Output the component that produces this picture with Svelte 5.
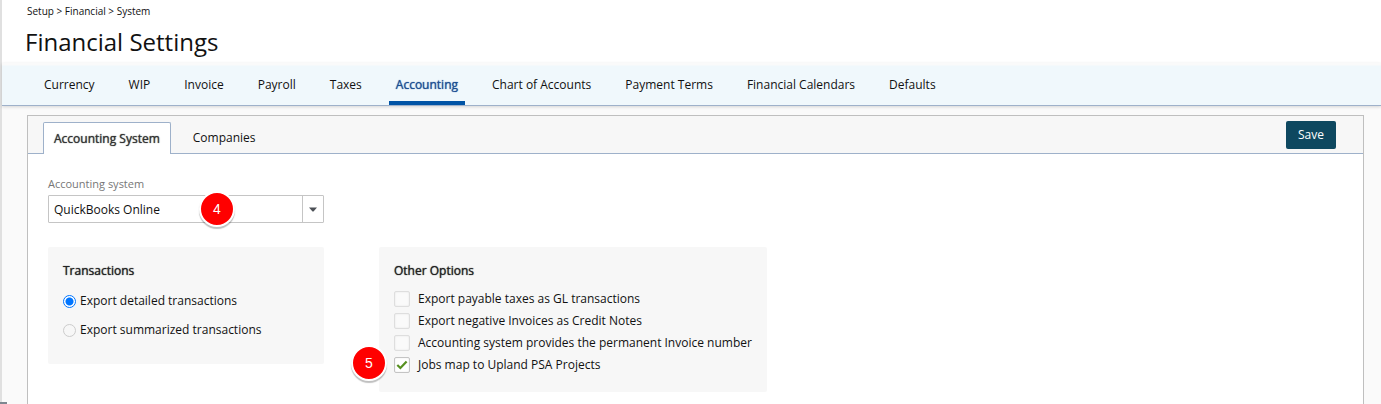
<script>
  const crumbs = ['Setup', 'Financial', 'System'];
  const sections = ['Currency', 'WIP', 'Invoice', 'Payroll', 'Taxes', 'Accounting', 'Chart of Accounts', 'Payment Terms', 'Financial Calendars', 'Defaults'];
  const tabs = ['Accounting System', 'Companies'];
  let section = $state('Accounting');
  let tab = $state('Accounting System');
  let transactions = $state('detailed');
  let options = $state([
    { label: 'Export payable taxes as GL transactions', on: false },
    { label: 'Export negative Invoices as Credit Notes', on: false },
    { label: 'Accounting system provides the permanent Invoice number', on: false },
    { label: 'Jobs map to Upland PSA Projects', on: true, step: 5 }
  ]);
</script>

<div class="page">
  <header>
    <div class="crumbs">{crumbs.join(' > ')}</div>
    <h1>Financial Settings</h1>
  </header>
  <nav>
    {#each sections as name}
      <a href="#section" class:current={name === section} onclick={() => (section = name)}>{name}</a>
    {/each}
  </nav>
  <main>
    <div class="panel">
      <div class="bar">
        <div class="tabs" role="tablist">
          {#each tabs as name}
            <button class="tab" role="tab" aria-selected={name === tab} class:selected={name === tab} onclick={() => (tab = name)}>{name}</button>
          {/each}
        </div>
        <button class="save">Save</button>
      </div>
      <div class="body">
        <div class="field">
          <label for="system">Accounting system</label>
          <div class="combo">
            <select id="system">
              <option>QuickBooks Online</option>
            </select>
            <span class="arrow"><svg width="8" height="5" viewBox="0 0 8 5"><path d="M0 0.5H8L4.5 4.5H3.5Z" fill="#4d5157" /></svg></span>
            <span class="step on-field">4</span>
          </div>
        </div>
        <div class="groups">
          <fieldset class="narrow">
            <h2>Transactions</h2>
            <div class="radios">
              <label><input type="radio" name="transactions" value="detailed" bind:group={transactions} />Export detailed transactions</label>
              <label><input type="radio" name="transactions" value="summarized" bind:group={transactions} />Export summarized transactions</label>
            </div>
          </fieldset>
          <fieldset>
            <h2>Other Options</h2>
            <div class="checks">
              {#each options as option}
                <label>
                  <span class="box">
                    <input type="checkbox" bind:checked={option.on} />
                    {#if option.on}
                      <svg class="tick" width="12" height="10" viewBox="0 0 12 10"><path d="M1.3 5L4.4 8L10.6 1.4" fill="none" stroke="#579020" stroke-width="2.2" /></svg>
                    {/if}
                  </span>
                  {option.label}
                  {#if option.step}<span class="step on-option">{option.step}</span>{/if}
                </label>
              {/each}
            </div>
          </fieldset>
        </div>
      </div>
    </div>
  </main>
  <div class="status"></div>
</div>

<style>
  :global(body) {
    margin: 0;
    background: #fafafa;
  }
  .page {
    box-sizing: border-box;
    position: relative;
    display: flex;
    flex-direction: column;
    min-height: 100vh;
    border-left: 2px solid #e0e0e0;
    font: 12px/18px "Open Sans", sans-serif;
    color: #111;
  }
  header {
    padding: 2px 23px 4px;
    background: #fff;
  }
  .crumbs {
    padding-left: 2px;
    font-size: 10px;
    line-height: 18px;
  }
  h1 {
    margin: 4px 0 0;
    font-size: 24px;
    line-height: 35px;
    font-weight: 400;
  }
  nav {
    display: flex;
    gap: 20px;
    padding: 0 35px;
    background: linear-gradient(#fafafa 0, #fafafa 2px, #f0f8fc 3px);
    border-bottom: 1px solid #9eb1ca;
    box-shadow: 0 1px 3px #00000026;
  }
  nav a {
    padding: 13px 7px 7px;
    border-bottom: 4px solid transparent;
    color: inherit;
    text-decoration: none;
    white-space: nowrap;
  }
  nav a.current {
    border-color: #0054a6;
    color: #1b4f93;
  }
  main {
    display: flex;
    flex: 1;
    padding: 9px 17px 0 25px;
  }
  .panel {
    flex: 1;
    border: 1px solid #bfbfbf;
    border-bottom: 0;
    background: #fff;
  }
  .bar {
    display: flex;
    justify-content: space-between;
    padding: 5px 27px 0 15px;
    background: #f7f7f7;
    border-bottom: 1px solid #9eb1ca;
  }
  .tabs {
    display: flex;
    gap: 11px;
    margin: 1px 0 -1px;
  }
  button {
    font: inherit;
    color: inherit;
    cursor: pointer;
  }
  .tab {
    padding: 0 10px 2px;
    border: 1px solid transparent;
    border-bottom: 0;
    border-radius: 2px 2px 0 0;
    background: none;
  }
  .tab.selected {
    padding-bottom: 0;
    border-color: #9eb1ca;
    background: #fff;
    color: #333;
  }
  nav a.current,
  .tab.selected,
  h2 {
    text-shadow: 0 0 1px currentColor;
  }
  .save {
    height: 28px;
    margin-bottom: 4px;
    padding: 0 12px;
    border: 0;
    border-radius: 2px;
    background: #0e4860;
    color: #fff;
  }
  .body {
    padding: 21px 20px 12px;
  }
  .field {
    width: 276px;
  }
  .field label {
    display: block;
    margin-bottom: 2px;
    font-size: 11px;
    color: #777;
  }
  .combo {
    position: relative;
    display: flex;
    border: 1px solid #c5c5c5;
    border-radius: 1px;
  }
  select {
    flex: 1;
    height: 26px;
    padding: 2px 5px 0;
    border: 0;
    appearance: none;
    background: #fff;
    font: inherit;
    color: inherit;
  }
  .arrow {
    display: flex;
    align-items: center;
    justify-content: center;
    width: 20px;
    border-left: 1px solid #c5c5c5;
    pointer-events: none;
  }
  .step {
    position: absolute;
    box-sizing: border-box;
    width: 36px;
    height: 36px;
    border: 2px solid #fff;
    border-radius: 50%;
    background: #f00;
    box-shadow: 0 2px 1px #00000040;
    color: #fff;
    font: 14px/32px "Liberation Sans", sans-serif;
    text-align: center;
  }
  .on-field {
    left: 150px;
    top: -5px;
  }
  .on-option {
    left: -43px;
    top: -9px;
  }
  .groups {
    display: flex;
    align-items: flex-start;
    gap: 55px;
    margin-top: 24px;
  }
  fieldset {
    box-sizing: border-box;
    min-width: 0;
    margin: 0;
    padding: 15px 15px 16px;
    border: 0;
    border-radius: 2px;
    background: #f7f7f7;
  }
  .narrow {
    width: 276px;
    padding-bottom: 25px;
  }
  h2 {
    margin: 0 0 8px;
    font-size: 12px;
    line-height: 18px;
    font-weight: 400;
    color: #222;
  }
  .radios {
    display: grid;
    gap: 11px;
    margin-top: 12px;
  }
  .radios label {
    display: flex;
    align-items: center;
    gap: 4px;
  }
  input {
    appearance: none;
    box-sizing: border-box;
    margin: 0;
  }
  .radios input {
    width: 13px;
    height: 13px;
    border: 1px solid #ccc;
    border-radius: 50%;
  }
  .radios input:checked {
    border-color: #0075ff;
    background: radial-gradient(circle, #0075ff 3.5px, #fff 4.5px);
  }
  .checks label {
    position: relative;
    display: flex;
    align-items: center;
    gap: 8px;
    height: 22px;
  }
  .box {
    position: relative;
    display: flex;
  }
  .checks input {
    width: 16px;
    height: 16px;
    border: 1px solid #dedede;
    border-radius: 2px;
    background: #fafafa;
    box-shadow: inset 0 0 2px #0000001a;
  }
  .checks input:checked {
    border-color: #c4c4c4;
    background: #fff;
  }
  .tick {
    position: absolute;
    left: 2px;
    top: 3px;
    pointer-events: none;
  }
  .status {
    position: absolute;
    left: -2px;
    bottom: 0;
    width: 7px;
    height: 2px;
    background: #7d8790;
  }
</style>
